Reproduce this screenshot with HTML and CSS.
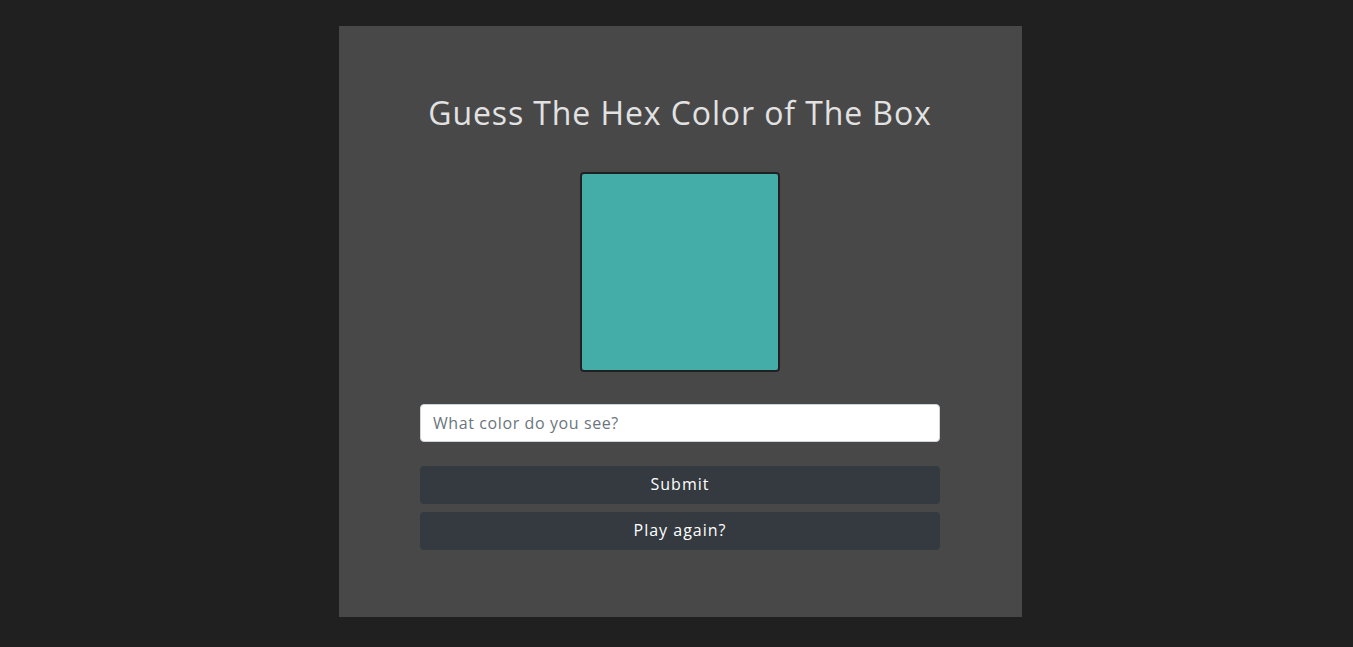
FILE: index.html
```html
<!DOCTYPE html>
<html lang="en">
<head>
<meta charset="utf-8">
<title>Guess The Hex Color</title>
<link rel="stylesheet" href="styles.css">
</head>
<body>
<main class="panel">
  <h1 class="title">Guess The Hex Color of The Box</h1>
  <div class="swatch"></div>
  <form class="form">
    <input class="guess" type="text" placeholder="What color do you see?">
    <button class="btn btn-submit" type="button">Submit</button>
    <button class="btn" type="button">Play again?</button>
  </form>
</main>
</body>
</html>
```
FILE: styles.css
```css
html, body {
  margin: 0;
  padding: 0;
  background: #202020;
  height: 100%;
}
body {
  font-family: "Open Sans", "Liberation Sans", sans-serif;
  padding-top: 26px;
  padding-left: 8px;
  box-sizing: border-box;
}
.panel {
  width: 683px;
  height: 591px;
  margin: 0 auto;
  padding: 2px 1px 0 0;
  box-sizing: border-box;
  background: #484848;
  display: flex;
  flex-direction: column;
  align-items: center;
}
.title {
  margin: 66px 0 0;
  font-size: 32px;
  font-weight: 400;
  line-height: 38px;
  color: #e2e2e2;
  letter-spacing: 0.9px;
}
.swatch {
  margin-top: 40px;
  width: 200px;
  height: 200px;
  box-sizing: border-box;
  border: 2px solid #1e2222;
  border-radius: 4px;
  background: #45ada8;
}
.form {
  margin-top: 32px;
  width: 520px;
  display: flex;
  flex-direction: column;
}
.guess {
  height: 38px;
  box-sizing: border-box;
  border: 1px solid #ced4da;
  border-radius: 4px;
  padding: 0 12px;
  font-family: inherit;
  font-size: 16px;
  letter-spacing: 0.6px;
  color: #495057;
  background: #fff;
  margin: 0 0 24px;
  outline: none;
}
.guess::placeholder {
  color: #6c757d;
}
.btn {
  height: 38px;
  border: none;
  border-radius: 4px;
  background: #343a40;
  color: #fff;
  font-family: inherit;
  font-size: 16px;
  letter-spacing: 1px;
  padding: 0 0 2px;
}
.btn-submit {
  margin-bottom: 8px;
}
```
